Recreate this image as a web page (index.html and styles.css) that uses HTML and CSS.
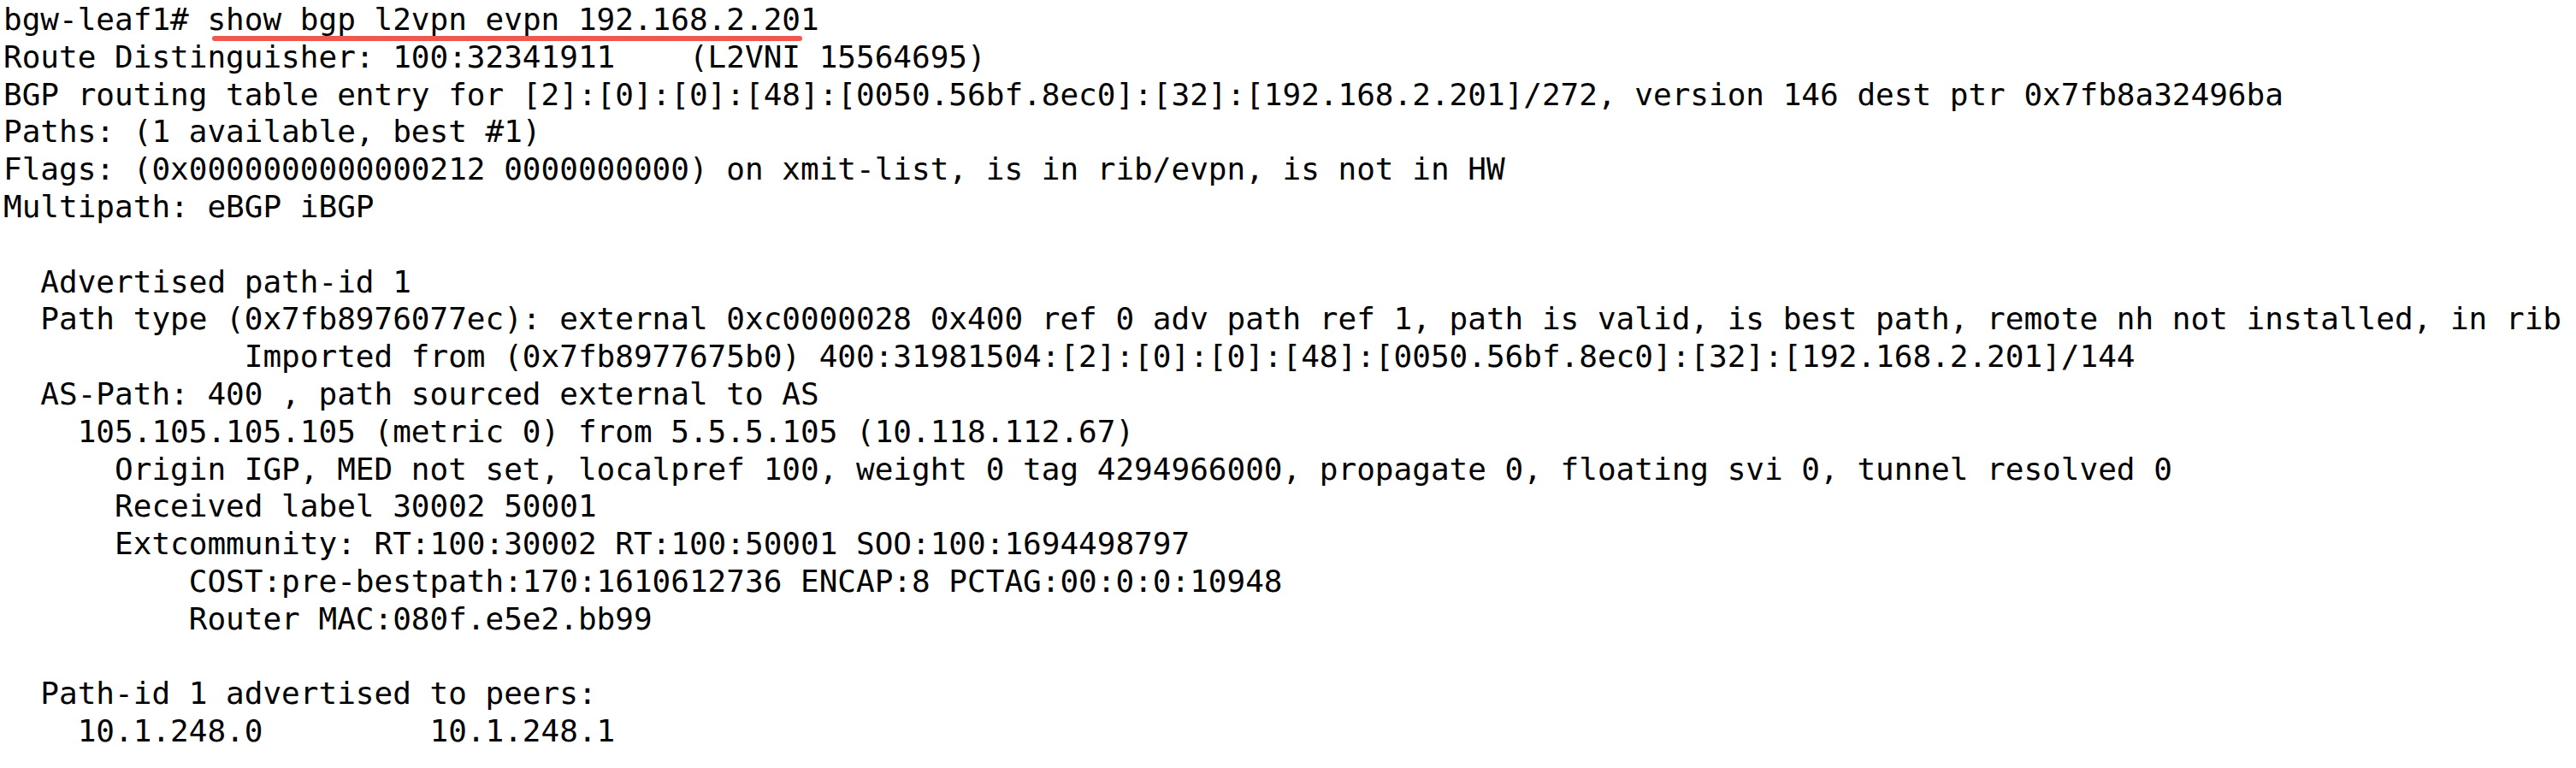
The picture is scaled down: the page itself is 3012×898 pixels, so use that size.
FILE: index.html
```html
<!DOCTYPE html>
<html>
<head>
<meta charset="utf-8">
<link rel="stylesheet" href="styles.css">
</head>
<body>
<div class="term">
<pre class="out">bgw-leaf1# <span class="cmd">show bgp l2vpn evpn 192.168.2.201</span>
Route Distinguisher: 100:32341911    (L2VNI 15564695)
BGP routing table entry for [2]:[0]:[0]:[48]:[0050.56bf.8ec0]:[32]:[192.168.2.201]/272, version 146 dest ptr 0x7fb8a32496ba
Paths: (1 available, best #1)
Flags: (0x0000000000000212 0000000000) on xmit-list, is in rib/evpn, is not in HW
Multipath: eBGP iBGP

  Advertised path-id 1
  Path type (0x7fb8976077ec): external 0xc0000028 0x400 ref 0 adv path ref 1, path is valid, is best path, remote nh not installed, in rib
             Imported from (0x7fb8977675b0) 400:31981504:[2]:[0]:[0]:[48]:[0050.56bf.8ec0]:[32]:[192.168.2.201]/144
  AS-Path: 400 , path sourced external to AS
    105.105.105.105 (metric 0) from 5.5.5.105 (10.118.112.67)
      Origin IGP, MED not set, localpref 100, weight 0 tag 4294966000, propagate 0, floating svi 0, tunnel resolved 0
      Received label 30002 50001
      Extcommunity: RT:100:30002 RT:100:50001 SOO:100:1694498797
          COST:pre-bestpath:170:1610612736 ENCAP:8 PCTAG:00:0:0:10948
          Router MAC:080f.e5e2.bb99

  Path-id 1 advertised to peers:
    10.1.248.0         10.1.248.1</pre>
</div>
</body>
</html>
```

FILE: styles.css
```css
html, body {
  margin: 0;
  padding: 0;
  background: #ffffff;
}
.term {
  width: 3012px;
  height: 898px;
  overflow: hidden;
  background: #ffffff;
}
.out {
  margin: 0;
  padding: 1px 0 0 4px;
  font-family: "DejaVu Sans Mono", monospace;
  font-size: 36px;
  line-height: 43.8px;
  color: #000000;
  white-space: pre;
}
.cmd {
  position: relative;
}
.cmd::after {
  content: "";
  position: absolute;
  left: 6px;
  right: 20px;
  top: 40px;
  height: 6px;
  border-radius: 3px;
  background: #f0574f;
}
```
